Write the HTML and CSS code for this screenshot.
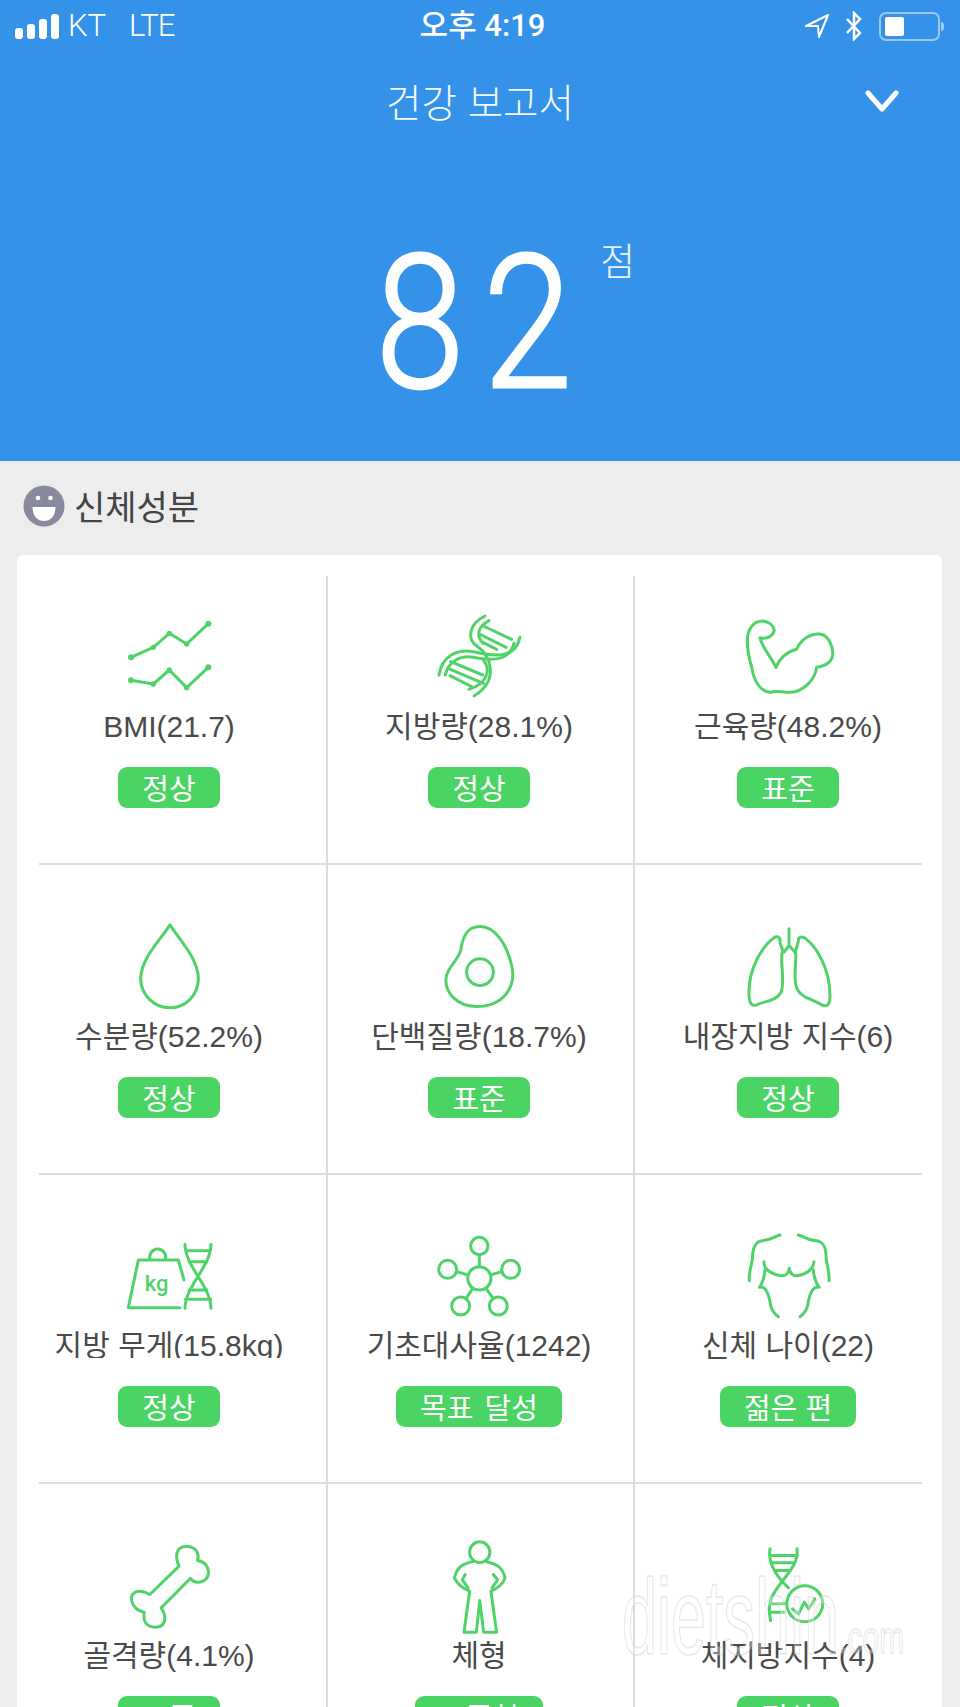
FILE: index.html
```html
<!DOCTYPE html>
<html lang="ko">
<head>
<meta charset="utf-8">
<title>건강 보고서</title>
<link rel="stylesheet" href="styles.css">
</head>
<body>
<div class="page">
  <header class="hero">
    <div class="status">
      <div class="status-left">
        <div class="signal"><i class="b1"></i><i class="b2"></i><i class="b3"></i><i class="b4"></i></div>
        <span class="carrier">KT</span>
        <span class="network">LTE</span>
      </div>
      <div class="clock">오후 4:19</div>
      <div class="status-right">
        <svg class="st-arrow" viewBox="0 0 25 24"><path d="M23 1 1 12h12l1 11z"/></svg>
        <svg class="st-bt" viewBox="0 0 18 30"><path d="M2 8l13 14-6 6V2l6 6L2 22"/></svg>
        <div class="battery"><div class="battery-fill"></div></div>
      </div>
    </div>
    <div class="titlebar">
      <h1 class="title">건강 보고서</h1>
      <svg class="chevron" viewBox="0 0 34 22"><path d="M3 3l14 16L31 3"/></svg>
    </div>
    <div class="score">
      <div class="score-num">82<span class="score-unit">점</span></div>
    </div>
  </header>

  <main class="body">
    <div class="section-head">
      <svg class="smile" viewBox="0 0 42 42">
        <circle class="smile-face" cx="21" cy="21" r="20.5"/>
        <circle class="smile-white" cx="15" cy="13" r="2.3"/>
        <circle class="smile-white" cx="27.5" cy="13" r="2.3"/>
        <path class="smile-white" d="M9.500 22h23c0 9-5 14-11.500 14S9.500 31 9.500 22z"/>
      </svg>
      <h2 class="section-title">신체성분</h2>
    </div>

    <section class="card">
      <div class="row">
        <div class="cell c1">
          <svg class="icon" viewBox="357 456 300 270" preserveAspectRatio="none">
            <path d="M393 592 460 562 508 520 560 552 625 491M393 661 460 672 508 630 560 683 625 622"/>
            <g class="dots"><circle cx="393" cy="592" r="9"/><circle cx="460" cy="562" r="8"/><circle cx="508" cy="520" r="8"/><circle cx="560" cy="552" r="8"/><circle cx="625" cy="491" r="9"/><circle cx="393" cy="661" r="9"/><circle cx="460" cy="672" r="8"/><circle cx="508" cy="630" r="8"/><circle cx="560" cy="683" r="8"/><circle cx="625" cy="622" r="9"/></g>
          </svg>
          <div class="label">BMI(21.7)</div>
          <div class="badge">정상</div>
        </div>
        <div class="cell c2">
          <svg class="icon" viewBox="327 156 300 270" preserveAspectRatio="none">
            <path d="M357 345C365 290 410 265 460 275 520 288 585 300 600 232"/>
            <path d="M376 345C385 305 420 285 460 292 520 305 570 300 582 250"/>
            <path d="M495 168C450 190 435 235 475 262 510 285 540 360 462 408"/>
            <path d="M507 182C475 200 465 225 490 250"/>
            <path d="M447 388C500 372 515 330 490 300"/>
            <path d="M490 198 575 238M478 222 558 262M490 248 530 268M392 305 488 345M384 325 490 370M390 347 455 380"/>
          </svg>
          <div class="label">지방량(28.1%)</div>
          <div class="badge">정상</div>
        </div>
        <div class="cell c3">
          <svg class="icon" viewBox="294 156 300 270" preserveAspectRatio="none">
            <path d="M322 240C322 210 340 182 368 183 385 185 400 195 403 210 400 225 385 240 360 233 365 260 395 295 408 322 420 295 440 275 470 268 480 240 510 220 540 222 565 225 580 260 578 285 575 310 555 318 530 322 525 360 490 395 450 397 425 398 410 390 390 397 360 395 340 360 335 320 325 290 322 265 322 240Z"/>
          </svg>
          <div class="label">근육량(48.2%)</div>
          <div class="badge">표준</div>
        </div>
      </div>

      <div class="row">
        <div class="cell c1">
          <svg class="icon" viewBox="177 64.500 300 270" preserveAspectRatio="none">
            <path d="M330 73C300 120 242 175 242 235 242 285 285 322 330 322 375 322 415 285 415 235 415 175 360 120 330 73Z"/>
          </svg>
          <div class="label">수분량(52.2%)</div>
          <div class="badge">정상</div>
        </div>
        <div class="cell c2">
          <svg class="icon" viewBox="207 64.500 300 270" preserveAspectRatio="none">
            <path d="M360 78C405 78 440 130 455 195 470 260 430 318 350 318 290 318 255 275 258 235 260 200 295 180 302 150 308 110 320 78 360 78Z"/>
            <circle cx="360" cy="215" r="40"/>
          </svg>
          <div class="label">단백질량(18.7%)</div>
          <div class="badge">표준</div>
        </div>
        <div class="cell c3">
          <svg class="icon" viewBox="174 64.500 300 270" preserveAspectRatio="none">
            <path d="M327 85V130M312 155 327 135 345 155"/>
            <path d="M300 120C302 112 292 105 282 112 250 135 205 200 207 280 207 310 215 318 230 313 260 300 295 300 305 270 315 230 298 180 308 150 305 140 298 130 300 120Z"/>
            <path d="M355 120C355 110 365 105 378 115 410 140 450 205 450 285 450 315 440 320 425 313 395 295 355 290 348 255 340 220 350 185 347 155 348 140 355 130 355 120Z"/>
          </svg>
          <div class="label">내장지방 지수(6)</div>
          <div class="badge">정상</div>
        </div>
      </div>

      <div class="row">
        <div class="cell c1">
          <svg class="icon" viewBox="237 63 300 270" preserveAspectRatio="none">
            <path d="M330 148A24 24 0 1 1 376 148"/>
            <path d="M432 210 415 150H295L265 293H420"/>
            <text class="icon-text" x="314" y="243">kg</text>
            <path d="M435 103C435 170 513 228 513 295M513 103C513 170 435 228 435 295M440 122H508M447 155H501M447 240H501M436 268H512"/>
          </svg>
          <div class="label label-clip">지방 무게(15.8kg)</div>
          <div class="badge">정상</div>
        </div>
        <div class="cell c2">
          <svg class="icon" viewBox="237 63 300 270" preserveAspectRatio="none">
            <circle cx="388" cy="205" r="35"/><circle cx="388" cy="108" r="26"/><circle cx="293" cy="178" r="27"/><circle cx="482" cy="178" r="27"/><circle cx="332" cy="288" r="27"/><circle cx="445" cy="288" r="27"/>
            <path d="M388 134V170M319 185 355 195M456 185 421 195M348 266 368 235M430 266 408 235"/>
          </svg>
          <div class="label">기초대사율(1242)</div>
          <div class="badge badge-wide">목표 달성</div>
        </div>
        <div class="cell c3">
          <svg class="icon" viewBox="174 63 300 270" preserveAspectRatio="none">
            <path d="M300 75C280 80 270 92 245 92 225 95 220 115 218 130 220 160 205 180 208 212"/>
            <path d="M355 75C375 80 385 92 410 92 430 95 437 115 438 130 436 160 450 180 447 212"/>
            <path d="M252 155C250 180 280 195 305 197 320 198 325 190 328 175 330 190 336 198 350 197 375 195 400 180 402 155"/>
            <path d="M255 180C255 195 245 225 238 232 255 225 265 250 270 275 272 295 280 310 295 320"/>
            <path d="M400 180C400 195 410 225 418 232 400 225 390 250 385 275 383 295 375 310 360 320"/>
          </svg>
          <div class="label">신체 나이(22)</div>
          <div class="badge">젊은 편</div>
        </div>
      </div>

      <div class="row">
        <div class="cell c1">
          <svg class="icon" viewBox="105 121.500 178.200 270" preserveAspectRatio="none">
            <path d="M160 282 212 197C205 170 205 138 225 138 245 138 248 165 245 180 270 185 272 245 245 245 238 245 235 240 232 234L180 322C190 345 190 380 170 380 150 380 148 355 150 335 125 330 118 272 142 272 150 272 155 277 160 282Z"/>
          </svg>
          <div class="label">골격량(4.1%)</div>
          <div class="badge">표준</div>
        </div>
        <div class="cell c2">
          <svg class="icon" viewBox="657.600 121.500 178.200 270" preserveAspectRatio="none">
            <ellipse cx="748" cy="155" rx="18" ry="31"/>
            <path d="M735 183C720 190 708 195 703 232 708 250 720 265 730 272L720 395H742L748 300 755 395H778L768 272C778 265 790 250 793 232 788 195 775 190 760 183"/>
            <path d="M722 222 717 238 727 262M772 222 780 238 770 262"/>
          </svg>
          <div class="label">체형</div>
          <div class="badge">표준형</div>
        </div>
        <div class="cell c3">
          <svg class="icon" viewBox="1208 121.500 178.200 270" preserveAspectRatio="none">
            <path d="M1265 145C1260 190 1280 235 1298 262M1313 145C1318 190 1290 230 1275 270 1262 300 1262 330 1266 360M1265 165H1312M1268 187H1308M1276 210H1298M1270 310H1292M1265 335H1290"/>
            <ellipse cx="1327" cy="310" rx="32" ry="54"/>
            <path d="M1305 325 1316 340 1326 305 1334 325 1345 295"/>
          </svg>
          <div class="label">체지방지수(4)</div>
          <div class="badge">정상</div>
        </div>
      </div>
    </section>
    <div class="watermark"><span class="wm-main">dietshin</span><span class="wm-tld">.com</span></div>
  </main>
</div>
</body>
</html>
```
FILE: styles.css
```css
* { box-sizing: border-box; }
html, body { margin: 0; padding: 0; }
body {
  font-family: "Liberation Sans", "Noto Sans CJK KR", sans-serif;
  background: #ededed;
  color: #444;
}
.page { position: relative; width: 960px; height: 1707px; overflow: hidden; }

.hero { height: 461px; background: #3492e8; color: #fff; display: flex; flex-direction: column; }

.status {
  height: 52px;
  padding: 0 16px 0 15px;
  display: grid;
  grid-template-columns: 1fr auto 1fr;
  align-items: center;
}
.status-left { display: flex; align-items: center; }
.signal { display: flex; align-items: flex-end; gap: 4px; height: 25px; margin-right: 9px; }
.signal i { display: block; width: 8px; background: #fff; border-radius: 3px; }
.signal .b1 { height: 11px; }
.signal .b2 { height: 15px; }
.signal .b3 { height: 20px; }
.signal .b4 { height: 25px; }
.carrier, .network { font-family: "Roboto", sans-serif; font-weight: 300; font-size: 31px; line-height: 36px; }
.carrier { width: 61px; }
.network { letter-spacing: -1px; }
.clock { font-family: "Roboto", "Noto Sans CJK KR", sans-serif; font-weight: 500; font-size: 31px; line-height: 36px; margin-left: 6px; }
.status-right { display: flex; align-items: center; justify-content: flex-end; }
.st-arrow { width: 25px; height: 24px; margin-right: 15px; }
.st-arrow path { fill: none; stroke: #fff; stroke-width: 2; stroke-linejoin: round; }
.st-bt { width: 18px; height: 30px; margin-right: 16px; }
.st-bt path { fill: none; stroke: #fff; stroke-width: 2.500; }
.battery { position: relative; width: 61px; height: 29px; border: 2px solid rgba(255,255,255,.5); border-radius: 7px; padding: 3px 4px; margin-right: 4px; }
.battery::after { content: ""; position: absolute; right: -6px; top: 8px; width: 3px; height: 9px; border-radius: 0 3px 3px 0; background: rgba(255,255,255,.5); }
.battery-fill { width: 19px; height: 19px; background: #fff; border-radius: 2px; }

.titlebar { position: relative; height: 96px; display: flex; align-items: center; justify-content: center; }
.title { margin: 0; font-family: "Noto Sans CJK KR", sans-serif; font-size: 38.500px; font-weight: 300; line-height: 50px; color: #f4f9ff; }
.chevron { position: absolute; left: 865px; top: 38px; width: 34px; height: 22px; }
.chevron path { fill: none; stroke: #fff; stroke-width: 5; stroke-linecap: round; stroke-linejoin: round; }

.score { flex: 1; display: flex; justify-content: center; padding: 80px 0 0 7px; }
.score-num {
  position: relative;
  height: 190px;
  font-family: "Roboto", sans-serif;
  font-weight: 300;
  font-size: 186px;
  line-height: 190px;
  letter-spacing: 22px;
  -webkit-text-stroke: 3px #fff;
  transform: scaleX(.86);
}
.score-unit {
  position: absolute;
  left: 100%;
  top: 8px;
  margin-left: 14px;
  font-family: "Noto Sans CJK KR", sans-serif;
  font-size: 38px;
  font-weight: 300;
  line-height: 46px;
  letter-spacing: 0;
  -webkit-text-stroke: 0;
  color: #e6f2ff;
  transform: scaleX(1.16);
}

.section-head { height: 90px; margin-bottom: 4px; padding-left: 23px; display: flex; align-items: center; gap: 9px; }
.smile { width: 42px; height: 42px; flex: none; }
.smile-face { fill: #8a8a9e; }
.smile-white { fill: #fff; }
.section-title { margin: 0; font-family: "Noto Sans CJK KR", sans-serif; font-size: 34px; font-weight: 400; line-height: 46px; color: #444; }

.card { margin: 0 18px 0 17px; height: 1400px; padding: 21px 20px 0 22px; background: #fff; border-radius: 6px; }
.row { display: grid; grid-template-columns: 289px 307px 287px; height: 309.500px; border-bottom: 2px solid #ddd; }
.row:first-child { height: 289px; }
.row:last-child { border-bottom: none; }
.cell { display: flex; flex-direction: column; align-items: center; padding-top: 56.500px; }
.row:first-child .cell { padding-top: 36px; }
.c1 { border-right: 2px solid #ddd; padding-right: 27px; }
.c2 { border-right: 2px solid #ddd; padding-right: 3px; }
.c3 { padding-left: 19px; }

.icon { display: block; width: 100px; height: 90px; flex: none; margin-bottom: 8px; overflow: visible; }
.icon path, .icon circle, .icon ellipse {
  fill: none;
  stroke: #4fd368;
  stroke-width: 3px;
  stroke-linecap: round;
  stroke-linejoin: round;
  vector-effect: non-scaling-stroke;
}
.icon .dots circle { fill: #4fd368; stroke: none; }
.icon-text { font-family: "Roboto", sans-serif; font-weight: 500; font-size: 66px; fill: #4fd368; }

.label { height: 34px; line-height: 34px; font-size: 30px; white-space: nowrap; color: #4a4a4a; flex: none; }
.label-clip { height: 29px; margin-bottom: 5px; overflow: hidden; }
.badge {
  flex: none;
  margin-top: 23px;
  height: 41px;
  padding: 0 24px;
  display: flex;
  align-items: center;
  background: #4ad464;
  border-radius: 9px;
  color: #fff;
  font-family: "Noto Sans CJK KR", sans-serif;
  font-size: 29px;
  line-height: 41px;
  white-space: nowrap;
}
.badge-wide { word-spacing: 3px; }

.watermark {
  position: absolute;
  left: 622px;
  top: 1603px;
  height: 90px;
  white-space: nowrap;
  pointer-events: none;
  font-family: "Liberation Sans", sans-serif;
  color: rgba(255,255,255,.3);
  -webkit-text-stroke: 1px rgba(190,190,190,.35);
}
.wm-main { display: inline-block; font-size: 63px; line-height: 90px; transform-origin: left bottom; transform: scaleY(1.7); }
.wm-tld { display: inline-block; font-size: 30px; line-height: 90px; transform-origin: left bottom; transform: scaleY(1.500); }
```
